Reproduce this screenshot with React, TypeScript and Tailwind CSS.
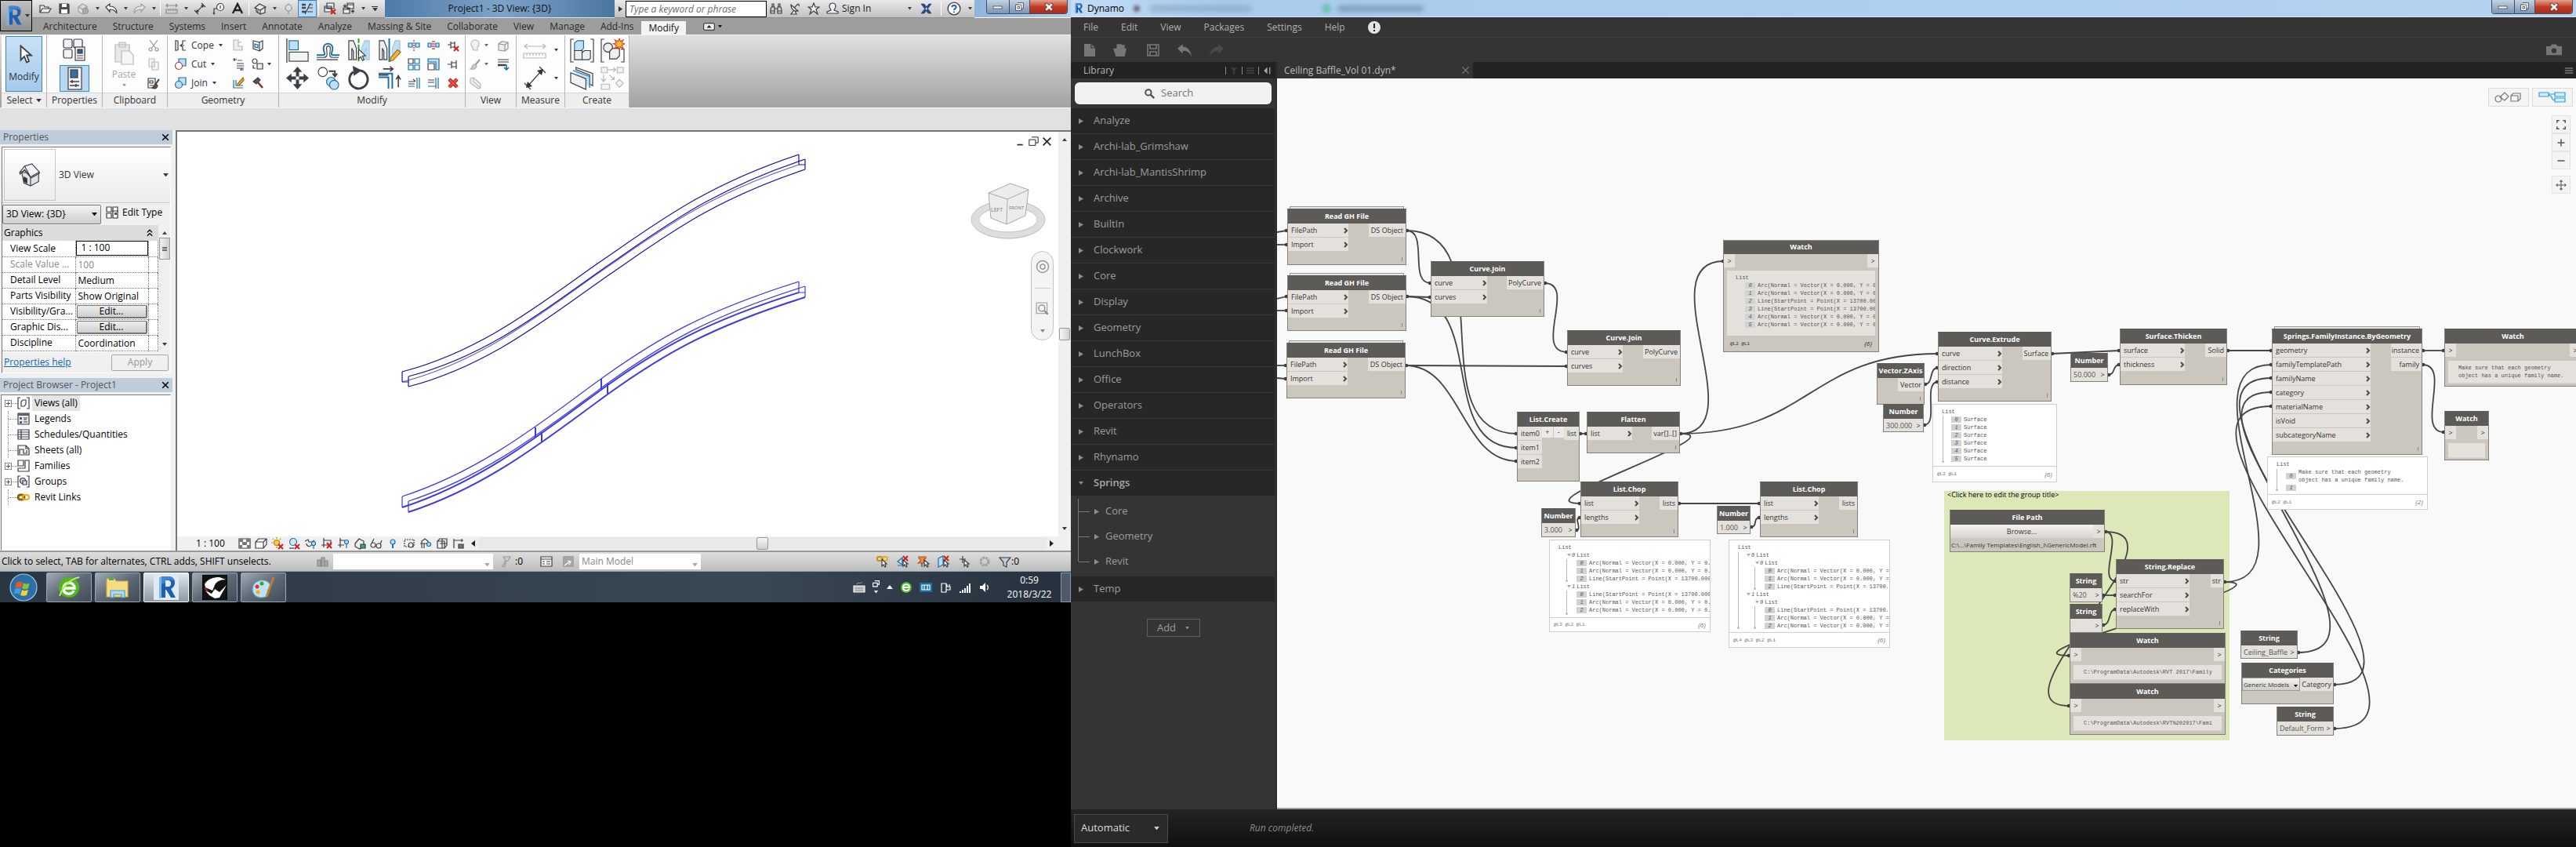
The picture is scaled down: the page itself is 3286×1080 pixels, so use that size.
import React from "react";

/* ---------- small drawing helpers ---------- */

type IcProps = { s?: number; w?: number; h?: number; vb?: string; children: React.ReactNode };
function Ic({ s = 16, w, h, vb = "0 0 16 16", children }: IcProps) {
  return (
    <svg width={w ?? s} height={h ?? s} viewBox={vb} fill="none" stroke="#3b3f46" strokeWidth="1.2" className="shrink-0" aria-hidden="true">
      {children}
    </svg>
  );
}

function Tri({ c = "#3a3a3a", w = 6 }: { c?: string; w?: number }) {
  return (
    <svg width={w} height={w / 2 + 1} viewBox="0 0 6 4" className="shrink-0" aria-hidden="true">
      <path d="M0 0h6L3 4z" fill={c} />
    </svg>
  );
}

function RLogo({ s }: { s: number }) {
  return (
    <svg width={s} height={s} viewBox="0 0 32 32" className="shrink-0" aria-hidden="true">
      <path d="M7 3l4-1v27l-4 1z" fill="#7fb6e6" />
      <path fillRule="evenodd" d="M10 2h8c6 0 9 3 9 8 0 4-2 6-5 8l6 11h-6l-6-10h-1v10h-5zM15 7v8h3c3 0 4-1 4-4s-1-4-4-4z" fill="#1f5fae" />
      <path d="M10 2h8c5 0 8 2 9 6-4-2-9-2-12-1v3l-5 2z" fill="#3f86cf" />
    </svg>
  );
}

function WindowButtons() {
  return (
    <div className="flex h-[18px] overflow-hidden rounded-b border border-t-0 border-[#3c4f66] text-white">
      <button aria-label="Minimize" className="flex w-7 items-center justify-center bg-linear-to-b from-[#c5d3e2] to-[#7c95b2]"><Ic w={14} h={8} vb="0 0 14 8"><rect x="1" y="3" width="11" height="3" fill="#fff" stroke="#445" strokeWidth=".8" /></Ic></button>
      <button aria-label="Restore" className="flex w-[27px] items-center justify-center border-x border-[#3c4f66] bg-linear-to-b from-[#c5d3e2] to-[#7c95b2]"><Ic s={13}><path d="M5 2h9v9h-3M2 5h9v9H2zM5 8h3v3H5z" stroke="#334" strokeWidth="1" fill="#fff" /></Ic></button>
      <button aria-label="Close" className="flex w-[47px] items-center justify-center bg-linear-to-b from-[#e0a08f] via-[#c23b22] to-[#a83018]"><Ic s={12}><path d="M2 2l12 12M14 2L2 14" stroke="#533" strokeWidth="5" /><path d="M3 3l10 10M13 3L3 13" stroke="#fff" strokeWidth="3.4" /></Ic></button>
    </div>
  );
}

/* ---------- Revit: header ---------- */

function QBtn({ label, on, children }: { label: string; on?: boolean; children: React.ReactNode }) {
  return (
    <button
      aria-label={label}
      className={on ? "flex h-[22px] w-6 items-center justify-center border border-[#3d84c6] bg-[#b8d8f2]" : "flex h-[22px] w-6 items-center justify-center"}
    >
      {children}
    </button>
  );
}
const QArr = () => (
  <span className="flex w-3 justify-center">
    <Tri w={5} />
  </span>
);
const QSep = () => <span className="mx-[2px] h-[18px] w-px border-r border-white bg-[#a9a9a9]" />;

function QuickAccess() {
  return (
    <div className="flex h-[23px] w-[450px] shrink-0 items-center border-b border-[#8d8d8d] bg-linear-to-b from-[#e9e9e9] to-[#c2c2c2] pl-[5px]">
      <QBtn label="Open"><Ic><path d="M1 13V4h5l1 2h5v2M1 13l3-5h11l-3 5z" fill="#eee" /></Ic></QBtn>
      <QBtn label="Save"><Ic><path d="M2 2h11l1 1v11H2z" fill="#4a4f57" /><path d="M5 2h6v4H5zM4 9h8v5H4z" fill="#fff" stroke="none" /></Ic></QBtn>
      <QBtn label="Synchronize"><Ic><path d="M2 6l5-4 6 3v6l-5 4-6-3zM2 6l6 3 5-4M8 9v6" stroke="#a0a0a0" fill="#dcdcdc" /><circle cx="11" cy="11" r="3.5" fill="#aaa" stroke="#999" /></Ic></QBtn>
      <QArr />
      <QBtn label="Undo"><Ic><path d="M1 6l5-4v3c5 0 9 2 9 9-2-4-5-5-9-5v3z" fill="#fff" /></Ic></QBtn>
      <QArr />
      <QBtn label="Redo"><Ic><path d="M15 6l-5-4v3c-5 0-9 2-9 9 2-4 5-5 9-5v3z" fill="#e6e6e6" stroke="#a0a0a0" /></Ic></QBtn>
      <QArr />
      <QSep />
      <QBtn label="Measure"><Ic><path d="M1 4h14M3 2L1 4l2 2M13 2l2 2-2 2M1 9h14v5H1zM4 9v2M7 9v2M10 9v2M13 9v2" stroke="#8b8b8b" /></Ic></QBtn>
      <QArr />
      <QBtn label="Aligned Dimension"><Ic><path d="M3 13L13 3M1 10l5 5M10 1l5 5" /><path d="M3 13l1-4 3 3zM13 3l-1 4-3-3z" fill="#333" stroke="none" /></Ic></QBtn>
      <QBtn label="Tag by Category"><Ic><circle cx="10" cy="6" r="4.5" fill="#fff" /><path d="M10 4v4M6 8H2v6M1 13l1 2 1-2" /></Ic></QBtn>
      <QBtn label="Text"><Ic><path d="M2 14L8 2l6 12M4.500 10h7" stroke="#222" strokeWidth="2.4" /></Ic></QBtn>
      <QSep />
      <QBtn label="Default 3D View"><Ic><path d="M1 7l6-5 8 4-1 2v5l-6 2-5-3V8z" fill="#e6e6e6" /><path d="M1 7l7 3 6-4M8 10v5M5 10v3" /></Ic></QBtn>
      <QArr />
      <QBtn label="Section"><Ic><path d="M8 1v14M3 8h10" stroke="#999" /><circle cx="8" cy="7" r="4" stroke="#999" fill="#ddd" /></Ic></QBtn>
      <QBtn label="Thin Lines" on><Ic><path d="M1 3h5M1 7h5M1 12h5" strokeWidth="2.5" stroke="#3d4a5a" /><path d="M12 1L5 15M10 3h5M9 7h6M8 12h7" /></Ic></QBtn>
      <QSep />
      <QBtn label="Close Hidden Windows"><Ic><path d="M4 1h9v7H4zM1 5h9v7H1zM1 7h9" fill="#eee" /><path d="M9 9l6 6M15 9l-6 6" stroke="#d11f1f" strokeWidth="2" /></Ic></QBtn>
      <QBtn label="Switch Windows"><Ic><path d="M6 1h8v7H6zM1 7h8v7H1zM1 9h8M6 3h8" fill="#eee" /><path d="M3 2v4M1 4l2 2 2-2M13 14v-4M11 12l2-2 2 2" /></Ic></QBtn>
      <QArr />
      <span className="flex w-[18px] flex-col items-center gap-px"><span className="h-px w-2 bg-[#333]" /><Tri w={7} /></span>
    </div>
  );
}

function InfoCenter() {
  return (
    <div className="flex h-[23px] w-[459px] shrink-0 items-center border-b border-[#8d8d8d] bg-linear-to-b from-[#e9e9e9] to-[#c2c2c2]">
      <span className="flex w-[14px] justify-center">
        <svg width="5" height="7" aria-hidden="true"><path d="M0 0v7l5-3.500z" fill="#333" /></svg>
      </span>
      <input aria-label="Search help" placeholder="Type a keyword or phrase" className="h-[21px] w-[180px] border border-black bg-white px-1 text-[12px] italic placeholder:text-[#6d6d6d]" />
      <span className="flex w-6 justify-center"><Ic><path d="M2 6h4v8H1V9zM14 6h-4v8h5V9zM6 8h4M3 2h2v4H3zM11 2h2v4h-2zM1 11h5M10 11h5" /></Ic></span>
      <span className="flex w-6 justify-center"><Ic><path d="M3 3c0 6 4 9 9 8zM7 7l5-5M12 2a2 2 0 011 3M7 10l-4 5h7l-2-4" fill="#e8e8e8" /></Ic></span>
      <span className="flex w-6 justify-center"><Ic><path d="M8 1l2 5h5l-4 3 2 6-5-4-5 4 2-6-4-3h5z" fill="#eee" /></Ic></span>
      <span className="flex w-6 justify-center"><Ic><path d="M8 1c3 0 4 2 4 4 0 3-2 3-2 5l5 2v2H1v-2l5-2c0-2-2-2-2-5 0-2 1-4 4-4z" fill="#f4f4f4" /></Ic></span>
      <span className="text-[12px] text-[#222]">Sign In</span>
      <span className="ml-auto flex w-3 justify-center"><Tri w={5} /></span>
      <span className="flex w-8 justify-center"><Ic><path d="M1 2h4l9 12h-4zM14 2h-3L1 14h4z" fill="#274f8e" stroke="#16305c" strokeWidth=".6" /></Ic></span>
      <QSep />
      <button aria-label="Help" className="flex w-7 justify-center"><Ic s={18}><circle cx="8" cy="8" r="7" fill="#fff" /><path d="M5.700 6.500c0-3 4.600-3 4.600 0 0 1.600-2.300 1.600-2.300 3.300M8 11v1.500" stroke="#2c62b0" strokeWidth="1.8" /></Ic></button>
      <span className="flex w-3 justify-center"><Tri w={5} /></span>
    </div>
  );
}

const TABS = ["Architecture", "Structure", "Systems", "Insert", "Annotate", "Analyze", "Massing & Site", "Collaborate", "View", "Manage", "Add-Ins"];

function RevitHeader() {
  return (
    <header className="flex bg-[#9d9d9d]">
      <button aria-label="Application menu" className="flex h-10 w-[41px] shrink-0 items-center justify-center gap-px border border-black bg-linear-to-b from-[#bfc0c1] to-[#8f9092]">
        <RLogo s={28} />
        <Tri w={6} />
      </button>
      <div className="flex min-w-0 flex-1 flex-col">
        <div className="flex h-[23px]">
          <QuickAccess />
          <div className="flex min-w-0 flex-1 items-center justify-center overflow-hidden border-b border-[#cfe2f5] bg-linear-to-r from-[#4d7aa8] via-[#7fa3c8] to-[#4a759f] text-[12px] whitespace-nowrap text-[#111]">
            Project1 - 3D View: {"{3D}"}
          </div>
          <InfoCenter />
          <div className="flex h-[23px] w-[123px] shrink-0 justify-end border-b border-white bg-linear-to-r from-[#8fb4dc] to-[#b5cfea] pr-1">
            <WindowButtons />
          </div>
        </div>
        <nav className="flex h-[21px] items-center pl-1 text-[12px] text-[#2b2b2b]">
          {TABS.map((t) => (
            <button key={t} className="px-[10px] whitespace-nowrap">{t}</button>
          ))}
          <button className="h-[17px] self-end bg-[#f4f4f4] px-[9px] leading-[17px] text-[#111]">Modify</button>
          <button aria-label="Minimize ribbon" className="ml-[22px] flex items-center gap-1">
            <Ic w={15} h={10} vb="0 0 15 10"><rect x=".6" y=".6" width="13.8" height="8.8" rx="2" fill="#eee" /><path d="M4.500 6.500h6L7.500 3z" fill="#222" stroke="none" /></Ic>
            <Tri c="#111" w={5} />
          </button>
        </nav>
      </div>
    </header>
  );
}

/* ---------- Revit: ribbon ---------- */

function Panel({ label, cls, children }: { label: React.ReactNode; cls: string; children: React.ReactNode }) {
  return (
    <section className={"flex shrink-0 flex-col border-r border-[#b5b5b5] bg-[#fdfdfd] " + cls}>
      <div className="flex h-[75px] items-center justify-center">{children}</div>
      <div className="flex flex-1 items-center justify-center gap-1 border-t border-[#d5d5d5] bg-[#eeeeee] text-[12px] whitespace-nowrap text-[#333]">{label}</div>
    </section>
  );
}

const B = "#1b6fa8";
const LB = "#bfe0f2";
const G = "#b9b9b9";

function Ribbon() {
  return (
    <div className="flex h-[94px] shrink-0 border-y border-[#f4f4f4] bg-linear-to-b from-[#e0e0e0] to-[#a2a2a2] pl-[2px]">
      <Panel cls="w-[58px]" label={<>Select <Tri w={7} /></>}>
        <button className="flex h-[71px] w-[47px] flex-col items-center justify-center gap-2 border border-[#3d84c6] bg-linear-to-b from-[#c9e1f5] to-[#a5c9ea] text-[12px] text-[#333]">
          <Ic s={24}><path d="M5 1v12l3-3 2 5 2-1-2-5h4z" fill="#fff" /></Ic>
          Modify
        </button>
      </Panel>
      <Panel cls="w-[71px]" label="Properties">
        <div className="flex flex-col items-center gap-1">
          <button aria-label="Type Properties"><Ic s={32} vb="0 0 32 32"><rect x="2" y="3" width="11" height="11" rx="2" fill="#f2f2f2" /><rect x="15" y="3" width="11" height="11" rx="2" fill="#f2f2f2" /><rect x="2" y="16" width="11" height="11" rx="2" fill="#f2f2f2" /><rect x="17" y="13" width="12" height="17" fill="#fff" /><rect x="20" y="16" width="6" height="5" fill="#2c5f8f" /><path d="M19 24h8M19 27h8" /></Ic></button>
          <button aria-label="Properties" className="flex h-[34px] w-[38px] items-center justify-center border border-[#3d84c6] bg-[#b8d8f2]"><Ic s={30} vb="0 0 30 30"><rect x="7" y="1" width="17" height="28" fill="#f5f5f5" /><rect x="10" y="4" width="9" height="10" fill="#3a6d9f" /><path d="M9 19h12M9 24h12M12 17v4M17 22v4" strokeWidth="1.5" /></Ic></button>
        </div>
      </Panel>
      <Panel cls="w-[83px]" label="Clipboard">
        <div className="flex items-center gap-3">
          <button className="flex w-9 flex-col items-center gap-[3px] text-[12px] text-[#a5a5a5]">
            <Ic s={30} vb="0 0 30 30"><path d="M4 4h18v22H4zM9 1h8v6H9z" fill="#e8e8e8" stroke={G} /><path d="M12 12h10l5 5v12H12z" fill="#f6f6f6" stroke={G} /></Ic>
            Paste
            <Tri c="#999" w={5} />
          </button>
          <div className="flex flex-col gap-2">
            <Ic><path d="M3 1l8 11M13 1L5 12" stroke="#999" /><circle cx="4" cy="13" r="2" stroke="#999" /><circle cx="12" cy="13" r="2" stroke="#999" /></Ic>
            <Ic><path d="M2 1h7v10H2zM6 5h8v10H6z" fill="#f4f4f4" stroke={G} /></Ic>
            <Ic><path d="M1 2h9v12H1zM3 5h4v3H3zM3 11h5" fill="#fff" /><path d="M15 3l-5 7" strokeWidth="2" /><path d="M11 9c-3 0-2 4-5 5 4 2 7 0 7-3z" fill="#7a4d2a" /></Ic>
          </div>
        </div>
      </Panel>
      <Panel cls="w-[142px]" label="Geometry">
        <div className="flex gap-3">
          <div className="flex flex-col gap-2 text-[12px] leading-4 text-[#333]">
            <button className="flex items-center gap-[6px]"><Ic><path d="M2 1v14M2 2h3M2 14h3M5 2v12M15 2h-4v4l-3 2 3 2v4h4M8 8h5" /></Ic>Cope <Tri w={5} /></button>
            <button className="flex items-center gap-[6px]"><Ic><path d="M6 1h9v9H6z" fill={LB} stroke={B} /><circle cx="6" cy="10" r="4.5" fill="#fff" stroke="#b33" /></Ic>Cut <Tri w={5} /></button>
            <button className="flex items-center gap-[6px]"><Ic><path d="M6 1h9v9H6z" fill={LB} stroke={B} /><circle cx="6" cy="10" r="4.5" fill={LB} stroke={B} /></Ic>Join <Tri w={5} /></button>
          </div>
          <div className="grid grid-cols-[25px_26px] gap-y-2">
            <Ic><path d="M2 1h6v8h5v5H2zM8 5l4-2" stroke={G} fill="#eee" /></Ic>
            <Ic><path d="M2 2l8 2v11l-8-3zM10 4l4-2v10l-4 3" fill="#fff" /><path d="M4 6l4 1v4l-4-1z" fill={LB} stroke={B} /></Ic>
            <Ic><path d="M1 2h5M3 0v4M12 13v3M6 7h9M6 10h9M6 13h9" /><path d="M7 3h6M10 15h5" stroke={B} /></Ic>
            <span className="flex items-center gap-1"><Ic><circle cx="4" cy="4" r="3" /><path d="M2 9v4h3M7 7h7v7H7z" fill="#eee" /></Ic><Tri w={5} /></span>
            <Ic><path d="M2 4v10h12M5 4v7h9" stroke={B} /><path d="M14 1L7 9v2h2l6-7z" fill="#f0b73c" stroke="#a06a10" /></Ic>
            <Ic><path d="M2 6l6-5 3 3-5 5z" fill="#555" /><path d="M8 7l6 7" strokeWidth="2.5" stroke="#6b3b2a" /></Ic>
          </div>
        </div>
      </Panel>
      <Panel cls="w-[238px]" label="Modify">
        <div className="flex gap-2">
          <div className="grid grid-cols-4 gap-x-2 gap-y-1">
            <Ic s={31} vb="0 0 32 32"><path d="M2 0v32" stroke="#222" /><rect x="5" y="3" width="12" height="12" fill={LB} stroke={B} /><rect x="5" y="18" width="25" height="12" fill="#f3f3f3" /></Ic>
            <Ic s={31} vb="0 0 32 32"><path d="M1 22h8c5 0 1-4 1-9 0-8 12-8 12 0 0 5-4 9 1 9h8" stroke={B} strokeWidth="2" /><path d="M1 28h28M1 25h9c7 0 4-7 4-12 0-4 5-4 5 0 0 5-3 12 3 12h8" /></Ic>
            <Ic s={31} vb="0 0 32 32"><path d="M3 3h6l4 10v15h-4V17l-2-4v15H3z" fill="#eee" /><path d="M30 3h-6l-4 10v15h4V17l2-4v15h4z" fill={LB} stroke="#9bc6de" /><path d="M16 0v31" stroke="#2c9a2c" strokeWidth="2" strokeDasharray="6 2" /><path d="M16 14v13l3-3 2 5 2-1-2-5h4z" fill="#fff" /></Ic>
            <Ic s={31} vb="0 0 32 32"><path d="M3 3h6l4 10v15h-4V17l-2-4v15H3z" fill="#eee" /><path d="M30 3h-6l-4 10v12l10-6z" fill={LB} stroke="#9bc6de" /><path d="M16 0v31" stroke={B} strokeWidth="2" /><path d="M27 15l4 3-10 11-4 1 1-5z" fill="#f0b73c" stroke="#a06a10" /></Ic>
            <Ic s={31} vb="0 0 32 32"><path d="M16 1l6 7h-4v6h6v-4l7 6-7 6v-4h-6v6h4l-6 7-6-7h4v-6H8v4l-7-6 7-6v4h6V8h-4z" fill="#3b3f46" stroke="none" /><rect x="14" y="14" width="4" height="4" fill="#fff" stroke="none" /></Ic>
            <Ic s={31} vb="0 0 32 32"><circle cx="9" cy="8" r="6" fill="#fff" /><path d="M17 7h8v5M22 10l3 4 3-4" strokeWidth="2" /><circle cx="20" cy="21" r="6" fill={LB} stroke={B} /><circle cx="24" cy="25" r="6" fill={LB} stroke={B} /></Ic>
            <Ic s={31} vb="0 0 32 32"><path d="M18 6a12 12 0 11-9 2" strokeWidth="3" /><path d="M9 1l10 5-9 6z" fill="#3b3f46" /></Ic>
            <Ic s={31} vb="0 0 32 32"><path d="M2 10h18v20M2 15h13v15" stroke={B} strokeWidth="2" /><path d="M8 4h12M17 1l4 3-4 3M28 28V14M25 18l3-5 3 5M2 12h13" strokeWidth="1.6" /></Ic>
          </div>
          <div className="grid grid-cols-3 gap-x-[9px] gap-y-2 py-[1px]">
            <Ic><path d="M1 5h5v5H1zM10 5h5v5h-5z" fill={LB} stroke={B} /><path d="M8 1v14" stroke="#c22" strokeDasharray="2 1" /></Ic>
            <Ic><path d="M1 5h4v5H1zM11 5h4v5h-4z" fill={LB} stroke={B} /><path d="M7 2v12M9 2v12" stroke="#c22" strokeDasharray="2 1" /></Ic>
            <Ic><path d="M1 7h4M5 3v9M5 5h5v5H5M10 3v9" /><path d="M9 9l6 6M15 9l-6 6" stroke="#d11f1f" strokeWidth="2" /></Ic>
            <Ic><path d="M1 1h6v6H1z" fill="#fff" /><path d="M9 1h6v6H9zM1 9h6v6H1zM9 9h6v6H9z" stroke={B} fill="#e8f5fb" /></Ic>
            <Ic><path d="M1 1h14v14h-4V5H1z" fill={LB} stroke={B} /><path d="M1 7h8v8H1z" fill="#fff" /></Ic>
            <Ic><path d="M1 8h5M6 4v9M6 6h6v5H6M12 3v11" /></Ic>
            <Ic><path d="M1 6h8M1 9h8M7 3l3 3" /><path d="M12 1v14M15 1v14M1 12h8" stroke={B} /></Ic>
            <Ic><path d="M1 4h8M1 7h8" /><path d="M1 12h10M11 1v14M14 1v14" stroke={B} /></Ic>
            <Ic><path d="M3 3l10 10M13 3L3 13" stroke="#7c1414" strokeWidth="4.5" /><path d="M3 3l10 10M13 3L3 13" stroke="#f04a3c" strokeWidth="3" /></Ic>
          </div>
        </div>
      </Panel>
      <Panel cls="w-[65px]" label="View">
        <div className="grid grid-cols-[16px_12px_20px] items-center gap-x-1 gap-y-2">
          <Ic><path d="M5 10c-4-3-2-9 3-9s7 6 3 9v4H6z" stroke={G} fill="#f2f2f2" /></Ic><Tri c="#666" w={5} />
          <Ic><path d="M2 6l4-3 8 1v8l-4 3-8-1zM2 6l8 1 4-3M10 7v8" stroke="#999" fill="#eee" /></Ic>
          <Ic><path d="M14 2L8 9" stroke="#999" strokeWidth="2" /><path d="M8 8c-4 0-3 4-6 6 5 1 8-1 8-4z" fill="#ccc" stroke="#aaa" /></Ic><Tri c="#666" w={5} />
          <Ic><path d="M1 2h14M1 5h14" /><path d="M1 9h10" strokeWidth="2.5" /><path d="M12 8v6M9 12l3 3 3-3" stroke={B} strokeWidth="1.6" /></Ic>
          <Ic><path d="M2 2l4-1 9 8v5l-3 1-10-7zM6 1v5l9 8" stroke={G} fill="#eee" /></Ic>
        </div>
      </Panel>
      <Panel cls="w-[62px]" label="Measure">
        <div className="grid grid-cols-[32px_6px] items-center gap-x-2 gap-y-1">
          <Ic s={32} vb="0 0 32 32"><path d="M2 11h27M6 8l-4 3 4 3M25 8l4 3-4 3M1 20h28v6H1zM5 20v3M9 20v3M13 20v3M17 20v3M21 20v3M25 20v3" stroke={G} /></Ic><Tri w={5} />
          <Ic s={32} vb="0 0 32 32"><path d="M5 27L25 5M2 22l8 8M21 1l8 8" /><path d="M4 28l2-8 6 6zM26 4l-2 8-6-6z" fill="#333" stroke="none" /></Ic><Tri w={5} />
        </div>
      </Panel>
      <Panel cls="w-[82px]" label="Create">
        <div className="grid grid-cols-2 gap-x-2 gap-y-1">
          <Ic s={31} vb="0 0 32 32"><path d="M5 1H1v30h4M27 1h4v30h-4" /><path d="M6 6l4-3h8v10l-3 3H6z" fill={LB} stroke={B} /><path d="M6 16h10v12H6zM16 19l3-3h8v10l-2 2h-9z" fill="#eee" /></Ic>
          <Ic s={31} vb="0 0 32 32"><path d="M5 1H1v30h4M27 14h4v17h-4" /><circle cx="10" cy="12" r="6" fill="#eee" /><path d="M12 17l4-4h9v10l-4 4h-9z" fill="#eee" /><path d="M25 0l1 4 4-2-2 4 4 1-4 2 2 4-4-2-1 4-2-4-4 2 2-4-4-2 4-1-2-4 4 2z" fill="#f9c23c" stroke="#e2481e" /></Ic>
          <Ic s={31} vb="0 0 32 32"><path d="M8 2l22 8v16l-4-2V12L8 5z" fill="#eee" /><path d="M4 6l22 8v15" stroke={B} fill={LB} /><path d="M1 9l20 8v14L1 22z" fill="#f1f1f1" /></Ic>
          <Ic s={31} vb="0 0 32 32"><path d="M1 2h8v7H1zM22 2h8v7h-8zM1 24h11v7H1zM25 18l5 5-5 5-5-5zM10 5h10M17 2l3 3-3 3M4 11v9M1 17l3 4 3-4M12 12l6 6M18 14v4h-4" stroke={G} fill="#f2f2f2" /></Ic>
        </div>
      </Panel>
    </div>
  );
}

/* ---------- Revit: docks ---------- */

function DockTitle({ children }: { children: React.ReactNode }) {
  return (
    <div className="flex h-[18px] shrink-0 items-center justify-between bg-[#bfcddb] px-1 text-[12px] text-[#555]">
      <span>{children}</span>
      <button aria-label="Close panel"><Ic s={10}><path d="M2 2l12 12M14 2L2 14" stroke="#000" strokeWidth="2.4" /></Ic></button>
    </div>
  );
}

const PROPS: { n: string; v: string; k?: "box" | "dim" | "btn" }[] = [
  { n: "View Scale", v: "1 : 100", k: "box" },
  { n: "Scale Value ...", v: "100", k: "dim" },
  { n: "Detail Level", v: "Medium" },
  { n: "Parts Visibility", v: "Show Original" },
  { n: "Visibility/Gra...", v: "Edit...", k: "btn" },
  { n: "Graphic Dis...", v: "Edit...", k: "btn" },
  { n: "Discipline", v: "Coordination" },
];

function PropertiesPalette() {
  return (
    <>
      <DockTitle>Properties</DockTitle>
      <div className="mt-[3px] mb-[6px] ml-[2px] flex h-[289px] w-[216px] flex-col overflow-hidden border border-white border-t-[#7a7a7a] border-l-[#7a7a7a] bg-[#f0f0f0] text-[12px] text-black">
        <div className="flex h-[71px] shrink-0 items-center border-b border-[#ccc] bg-linear-to-b from-white to-[#ececec] px-[2px]">
          <div className="flex h-[66px] w-[66px] items-center justify-center border border-[#c8c8c8]">
            <Ic s={30} vb="0 0 32 32"><path d="M5 13l3 14 9 4 11-6V12z" fill="#dfe3e8" /><path d="M2 13L9 4l10-3 10 11-12 7-8-9z" fill="#f3f4f6" /><path d="M2 13l1 2 6-6 9 11 11-6v-2M17 19v12M9 4l8 15" /><path d="M8 19l4 2v6l-4-2z" fill="#333" /></Ic>
          </div>
          <span className="ml-1 flex-1 text-[#333]">3D View</span>
          <Tri w={7} />
        </div>
        <div className="flex h-[28px] shrink-0 items-center gap-[6px]">
          <button className="flex h-[25px] w-[126px] items-center justify-between rounded-xs border border-[#777] bg-linear-to-b from-[#f2f2f2] to-[#cfcfcf] px-1">3D View: {"{3D}"}<Tri c="#000" w={7} /></button>
          <button className="flex items-center gap-[5px] pb-1"><Ic><path d="M1 1h6v6H1zM9 1h6v6H9zM1 9h6v6H1z" fill="#fff" /><path d="M9 6h6v9H9z" fill="#fff" stroke="#333" /><path d="M11 8h3v3h-3z" fill="#2c5f8f" stroke="none" /></Ic>Edit Type</button>
        </div>
        <div className="flex min-h-0 flex-1">
          <div className="min-w-0 flex-1 overflow-hidden bg-white">
            <div className="flex h-5 items-center justify-between bg-[#dcdcdc] pr-[6px] pl-[2px]">Graphics<Ic s={10}><path d="M3 7l5-5 5 5M3 14l5-5 5 5" stroke="#000" strokeWidth="2" /></Ic></div>
            <table className="w-full table-fixed border-collapse text-left whitespace-nowrap">
              <colgroup><col className="w-[93px]" /><col className="w-[93px]" /><col /></colgroup>
              <tbody>
                {PROPS.map((p) => (
                  <tr key={p.n} className="h-5 border-b border-dotted border-[#777]">
                    <th className={p.k === "dim" ? "overflow-hidden border-r border-dotted border-[#777] p-0 pl-[10px] font-normal text-[#888]" : "overflow-hidden border-r border-dotted border-[#777] p-0 pl-[10px] font-normal"}>{p.n}</th>
                    <td className="overflow-hidden border-r border-dotted border-[#777] p-0 leading-[19px]">
                      {p.k === "box" ? <span className="block h-[19px] border border-black pl-[6px] leading-4">{p.v}</span>
                        : p.k === "btn" ? <button className="mx-px block h-[17px] w-[90px] rounded-xs border border-r-2 border-b-2 border-[#777] bg-linear-to-b from-[#eee] to-[#cfcfcf] text-center leading-[14px]">{p.v}</button>
                        : <span className={p.k === "dim" ? "pl-[3px] text-[#888]" : "pl-[3px]"}>{p.v}</span>}
                    </td>
                    <td className="border-r border-dotted border-[#777] p-0" />
                  </tr>
                ))}
              </tbody>
            </table>
          </div>
          <div className="flex w-[15px] flex-col items-center justify-between bg-[#f0f0f0] py-2">
            <svg width="6" height="4" aria-hidden="true"><path d="M0 4h6L3 0z" fill="#444" /></svg>
            <span className="mt-1 flex h-7 w-[14px] flex-col items-center justify-center gap-px border border-[#999] bg-linear-to-r from-[#f4f4f4] to-[#cdcdcd]">
              <span className="h-px w-[6px] bg-[#444]" /><span className="h-px w-[6px] bg-[#444]" /><span className="h-px w-[6px] bg-[#444]" />
            </span>
            <span className="flex-1" />
            <Tri w={6} />
          </div>
        </div>
        <div className="flex h-[26px] shrink-0 items-center justify-between px-[2px]">
          <a href="#help" className="text-[#1464b4] underline">Properties help</a>
          <button className="h-[21px] w-[73px] rounded-xs border border-[#aaa] text-[#999]">Apply</button>
        </div>
      </div>
    </>
  );
}

const TREE: { t: string; plus?: boolean; icon: React.ReactNode }[] = [
  { t: "Views (all)", plus: true, icon: <path d="M4 1H1v14h3M12 1h3v14h-3M5 6l2-2h4v5l-2 3H5z" fill="#fff" /> },
  { t: "Legends", icon: <><path d="M1 1h14v14H1z" fill="#e8eaed" /><path d="M1 1h14v3H1zM3 6h3v3H3zM3 11h3v3H3z" fill="#5a616b" stroke="none" /><path d="M8 7h5M8 9h4M8 12h5" /></> },
  { t: "Schedules/Quantities", icon: <><path d="M1 2h14v12H1z" fill="#fff" /><path d="M1 5h14M1 8h14M1 11h14M5 2v12" /></> },
  { t: "Sheets (all)", icon: <path d="M1 2h10l4 4v8H1zM11 2v4h4M3 13V7h5v5h4V8" fill="#eef2f5" /> },
  { t: "Families", plus: true, icon: <path d="M1 1h7v7H1zM10 1h5v14H1v-4h9z" fill="#fff" /> },
  { t: "Groups", plus: true, icon: <><path d="M4 1H1v14h3M12 1h3v14h-3" /><circle cx="7" cy="7" r="3.5" fill="#ccd" /><path d="M7 7h5v5H7z" fill="#dde" /></> },
  { t: "Revit Links", icon: <><rect x="1" y="5" width="8" height="6" rx="3" stroke="#8a6208" strokeWidth="3" /><rect x="7" y="5" width="8" height="6" rx="3" stroke="#e8b11c" strokeWidth="2" /></> },
];

function ProjectBrowser() {
  return (
    <>
      <DockTitle>Project Browser - Project1</DockTitle>
      <ul className="mt-[3px] ml-px w-[217px] flex-1 border border-white border-t-[#7a7a7a] border-l-[#7a7a7a] bg-white text-[12px] text-black">
        {TREE.map((r) => (
          <li key={r.t} className="flex h-5 items-center">
            <span className="flex w-5 items-center pl-[4px]">
              {r.plus ? <Ic s={9} vb="0 0 9 9"><rect x=".5" y=".5" width="8" height="8" stroke="#888" strokeWidth="1" fill="#fff" /><path d="M2 4.500h5M4.500 2v5" stroke="#36598c" strokeWidth="1" /></Ic> : <span className="ml-1 h-5 w-px border-l border-dotted border-[#888]" />}
              <span className="h-px flex-1 border-t border-dotted border-[#888]" />
            </span>
            <Ic>{r.icon}</Ic>
            <span className={r.t === "Views (all)" ? "ml-[3px] bg-[#e6e4e4] px-[3px] leading-5" : "ml-[3px] px-[3px] leading-5"}>{r.t}</span>
          </li>
        ))}
      </ul>
    </>
  );
}

/* ---------- Revit: 3D view ---------- */

const TOP_EDGE = "M512 474C620 446 700 378 770 330S900 236 1018 197";
const LOW_EDGE = "M512 633C620 598 700 530 770 480S900 396 1018 359";

function ModelView() {
  return (
    <svg viewBox="226 168 1122 516" className="h-full w-full" preserveAspectRatio="xMidYMid meet" aria-label="3D model view">
      <g fill="none" stroke="#1414a0" strokeWidth="1.2">
        <path d={TOP_EDGE} /><path d={TOP_EDGE} transform="translate(0 13)" stroke="#6a6ac8" />
        <path d={TOP_EDGE} transform="translate(8 6)" /><path d={TOP_EDGE} transform="translate(8 19)" />
        <path d="M512 474v13M520 480v13M512 487h8M1018 197v13M1018 210h8M1026 203v13" />
      </g>
      <g fill="none" stroke="#3c3ce0" strokeWidth="1.2">
        <path d={LOW_EDGE} /><path d={LOW_EDGE} transform="translate(0 14)" strokeWidth="2" />
        <path d={LOW_EDGE} transform="translate(8 6)" /><path d={LOW_EDGE} transform="translate(8 20)" strokeWidth="2" />
        <path d="M512 633v14M520 639v14M1018 359v14M1018 373h8M1026 365v14" />
        <path d="M682 545v13M690 551v13M766 483v13M774 489v13" strokeWidth="2" />
      </g>
    </svg>
  );
}

const VIEW_ICONS: React.ReactNode[] = [
  <><path d="M1 2h14v12H1z" fill="#fff" /><path d="M1 2h5v4H1zM10 2h5v4h-5zM5 6h6v4H5zM1 10h4v4H1zM11 10h4v4h-4z" fill="#777" stroke="none" /></>,
  <path d="M1 6l4-4h10v7l-4 5H1zM1 6h10v8M11 6l4-4" fill="#fff" />,
  <><circle cx="7" cy="7" r="3.5" fill="#f6c944" stroke="#b98410" /><path d="M7 0v2M7 12v2M0 7h2M2 2l1 1M12 2l-1 1" stroke="#b98410" /><path d="M9 9l6 6M15 9l-6 6" stroke="#d11f1f" strokeWidth="2" /></>,
  <><circle cx="7" cy="6" r="4.5" fill="#cfe6f5" stroke={B} /><path d="M2 14h6" /><path d="M9 9l6 6M15 9l-6 6" stroke="#d11f1f" strokeWidth="2" /></>,
  <><path d="M1 5l4-2 1 3h4l3-2M3 8c0 4 5 5 7 1" /><circle cx="12" cy="8" r="2.5" fill="#bfe0f2" stroke={B} /><path d="M12 11v4" stroke={B} /></>,
  <><path d="M4 1v12M1 10h12M4 4h9v6" /><path d="M8 7l6 7M14 7l-6 7" stroke="#d11f1f" strokeWidth="2" /></>,
  <><path d="M4 1v12M1 10h8M4 4h6" /><circle cx="12" cy="6" r="2.5" fill="#bfe0f2" stroke={B} /><path d="M12 9v5" stroke={B} /></>,
  <><path d="M2 8l5-6 6 3v7l-5 3-6-3z" fill="#eee" /><path d="M9 9h6v5H9z" fill="#3ea76a" /></>,
  <><circle cx="4" cy="10" r="3" /><circle cx="11" cy="11" r="3" /><path d="M2 8L5 2M13 9l2-5" /></>,
  <><circle cx="8" cy="6" r="3" fill="#bfe0f2" stroke={B} /><path d="M8 9v5" stroke={B} strokeWidth="2" /></>,
  <><path d="M2 3h12v9H2z" strokeDasharray="2 1" /><circle cx="10" cy="10" r="3" fill="#eee" /></>,
  <><path d="M3 14V5l4-3 4 3v5M1 8h10M6 14V8" /><circle cx="12" cy="9" r="2.5" fill="#bfe0f2" stroke={B} /></>,
  <><path d="M2 5l3-3h9v8l-3 4H2zM2 5h9v9M5 8h9M8 2v12" /></>,
  <><path d="M2 2v12M2 4h12M12 2v4" /><path d="M8 9h6v5H8z" fill="#777" /></>,
];

function RevitCanvas() {
  return (
    <div className="flex min-w-0 flex-1 flex-col border-t-2 border-l-2 border-[#777] bg-white">
      <div className="flex min-h-0 flex-1">
        <div className="relative min-w-0 flex-1">
          <ModelView />
          <div className="absolute top-[6px] right-2 flex gap-1">
            <Ic s={13}><path d="M3 13h9" strokeWidth="2" stroke="#222" /></Ic>
            <Ic s={13}><path d="M5 1h10v9h-4M1 5h10v9H1z" stroke="#222" /></Ic>
            <Ic s={13}><path d="M2 2l12 12M14 2L2 14" strokeWidth="2" stroke="#222" /></Ic>
          </div>
          <svg className="absolute top-[56px] right-[14px]" width="100" height="90" viewBox="0 0 100 90" aria-label="View cube">
            <ellipse cx="50" cy="56" rx="42" ry="20" fill="none" stroke="#dedede" strokeWidth="9" />
            <ellipse cx="50" cy="56" rx="47" ry="24" fill="none" stroke="#bdbdbd" strokeWidth="1" />
            <ellipse cx="50" cy="56" rx="37" ry="16" fill="none" stroke="#c6c6c6" strokeWidth="1" />
            <path d="M25 22l28-12 23 8-4 33-24 11-20-8z" fill="#ececec" stroke="#a9a9a9" />
            <path d="M25 22l24 8 27-12M49 30l-1 32" stroke="#a9a9a9" fill="none" />
            <text x="28" y="46" fontSize="7" fill="#777">LEFT</text>
            <text x="51" y="43" fontSize="6" fill="#777">FRONT</text>
          </svg>
          <div className="absolute top-[152px] right-[6px] flex h-[114px] w-[29px] flex-col items-center justify-around rounded-2xl border border-[#c2c2c2] bg-[#f4f4f4]">
            <Ic s={20}><circle cx="8" cy="8" r="6" stroke="#999" /><circle cx="8" cy="8" r="2.5" stroke="#999" /></Ic>
            <span className="h-px w-5 bg-[#ccc]" />
            <Ic s={18}><path d="M1 1h12v12H1z" stroke="#aaa" /><circle cx="7" cy="7" r="3.5" stroke="#888" /><path d="M10 10l4 4" stroke="#888" strokeWidth="2" /></Ic>
            <Tri c="#888" w={6} />
          </div>
        </div>
        <div className="flex w-4 flex-col items-center bg-[#f0f0f0] py-2">
          <svg width="6" height="4" aria-hidden="true"><path d="M0 4h6L3 0z" fill="#444" /></svg>
          <span className="flex-1" />
          <span className="h-4 w-[14px] rounded-xs border border-[#999] bg-linear-to-r from-[#f6f6f6] to-[#cfcfcf]" />
          <span className="flex-1" />
          <Tri w={6} />
        </div>
      </div>
      <div className="flex h-[18px] shrink-0 items-center bg-[#f0f0f0] text-[12px] text-black">
        <span className="w-[78px] pl-6">1 : 100</span>
        <div className="flex gap-[5px]">{VIEW_ICONS.map((c, i) => <Ic key={i}>{c}</Ic>)}</div>
        <svg width="5" height="8" className="ml-2" aria-hidden="true"><path d="M5 0v8L0 4z" fill="#222" /></svg>
        <div className="mx-1 flex h-4 flex-1 justify-center bg-[#e9e9e9]"><span className="h-4 w-[15px] rounded-xs border border-[#999] bg-linear-to-b from-[#f6f6f6] to-[#cfcfcf]" /></div>
        <svg width="5" height="8" className="mr-[22px]" aria-hidden="true"><path d="M0 0v8l5-4z" fill="#222" /></svg>
      </div>
    </div>
  );
}

function StatusSelect({ label, value, cls }: { label: string; value: string; cls: string }) {
  return (
    <span className={"relative h-5 shrink-0 " + cls}>
      <select aria-label={label} className="h-full w-full appearance-none bg-white pl-[3px] text-[#888]"><option>{value}</option></select>
      <span className="absolute right-1 bottom-1"><Tri c="#aaa" w={7} /></span>
    </span>
  );
}

function RevitStatus() {
  return (
    <footer className="flex h-[26px] shrink-0 items-center border-t-2 border-[#999] bg-linear-to-b from-[#dedede] to-[#bdbdbd] text-[12px] text-black">
      <span className="w-[397px] pl-[2px] whitespace-nowrap">Click to select, TAB for alternates, CTRL adds, SHIFT unselects.</span>
      <span className="flex w-7 justify-center"><Ic><path d="M2 6h4v8H2zM7 3h4v11H7zM11 7h4v7h-4z" fill="#aaa" stroke="#888" /></Ic></span>
      <StatusSelect label="Workset" value="" cls="w-[204px]" />
      <span className="flex w-[60px] items-center gap-1 pl-2"><Ic><path d="M5 2h9l-3 5-3 1-1 7-3-1 4-7z" fill="#ccc" stroke="#999" /></Ic>:0</span>
      <span className="flex w-[50px] items-center gap-3"><Ic><path d="M1 2h14v12H1zM1 5h14M3 8h3M3 11h3M8 8h5M8 11h5" fill="#fff" /></Ic><Ic><path d="M1 1h14v14H1z" fill="#a4a4a4" stroke="none" /><path d="M3 13l7-5M7 7l4 1-2 4" stroke="#fff" /></Ic></span>
      <StatusSelect label="Design option" value="Main Model" cls="w-[155px]" />
      <div className="ml-auto flex items-center gap-[10px] pr-[66px]">
        <Ic><rect x="1" y="2" width="7" height="5" rx="2" stroke="#c8920e" strokeWidth="2" /><rect x="7" y="2" width="7" height="5" rx="2" stroke="#e8b11c" strokeWidth="2" /><path d="M7 5v9l2-2 2 3 1-1-1-3h2z" fill="#fff" /></Ic>
        <Ic><path d="M1 8l6-5v9zM1 13h8" stroke={B} fill={LB} /><path d="M8 1l6 6M14 1L8 7" stroke="#d11f1f" strokeWidth="2" /><path d="M8 6v8l2-2 2 3 1-1-1-3h2z" fill="#fff" /></Ic>
        <Ic><path d="M2 2h9v2l-2 1v3l3 2H1l3-2V5L2 4z" fill="#ee8a3c" stroke="#b55314" /><path d="M6 10v5" /><path d="M9 6v8l2-2 2 3 1-1-1-3h2z" fill="#fff" /></Ic>
        <Ic><path d="M1 4l6-3v11l-6 3z" stroke={B} fill={LB} /><path d="M8 1l6 6M14 1L8 7" stroke="#d11f1f" strokeWidth="2" /><path d="M8 6v8l2-2 2 3 1-1-1-3h2z" fill="#fff" /></Ic>
        <Ic><path d="M6 1v9M2 5h8" /><path d="M8 6v8l2-2 2 3 1-1-1-3h2z" fill="#fff" /></Ic>
        <Ic><circle cx="8" cy="8" r="5" stroke="#a0a0a0" strokeWidth="3" strokeDasharray="3 1" /></Ic>
        <span className="flex items-end"><Ic><path d="M1 2h14l-5 6v6l-4-2V8z" fill="#c3cddb" /></Ic>:0</span>
      </div>
    </footer>
  );
}

function Taskbar() {
  const btn = "flex h-[38px] items-center justify-center rounded-xs border border-[#9aa5b0] bg-linear-to-br from-[#a3acb5] via-[#5d6975] to-[#414d59]";
  return (
    <div className="flex h-10 shrink-0 items-center border-t border-[#8fa0ae] bg-linear-to-r from-[#2a3642] via-[#3a4755] via-70% to-[#26313d] text-white">
      <button aria-label="Start" className="flex w-[59px] justify-center">
        <Ic s={38} vb="0 0 38 38"><circle cx="19" cy="19" r="17" fill="#2a6fa5" stroke="#9cc7e6" /><path d="M10 13c3-2 5-2 8 0l-2 7c-3-2-5-1-8 0z" fill="#e8562a" stroke="none" /><path d="M19 13c3 2 5 2 8 0l-2 7c-3 2-5 2-8 0z" fill="#86c440" stroke="none" /><path d="M8 21c3-1 5-2 8 0l-2 7c-3-2-5-2-7 0z" fill="#3fa0e0" stroke="none" /><path d="M17 22c3 2 5 1 8 0l-2 7c-3 1-5 1-8 0z" fill="#f8cf3a" stroke="none" /></Ic>
      </button>
      <div className="flex items-center gap-1">
        <button aria-label="Browser" className={btn + " w-[58px]"}><Ic s={32} vb="0 0 32 32"><circle cx="16" cy="16" r="13" fill="#4fb81f" stroke="none" /><path d="M9 17h14c0-9-13-9-14 0 0 9 11 9 13 3" stroke="#fff" strokeWidth="3.5" /><path d="M4 27C10 10 20 5 29 3" stroke="#b4ec6c" strokeWidth="2" /></Ic></button>
        <button aria-label="Explorer" className={btn + " w-[58px]"}><Ic s={32} vb="0 0 32 32"><path d="M2 5h10l2 3h15v20H2z" fill="#f6dc82" stroke="#d6ae47" /><path d="M5 2h6v5H5z" fill="#4fae55" stroke="none" /><path d="M7 29V20h18v9h-4v-4H11v4z" fill="#a9dcf4" stroke="#4a9ccc" /></Ic></button>
        <button aria-label="Revit" className="flex h-[38px] w-[58px] items-center justify-center rounded-xs border border-white bg-linear-to-b from-[#e3e8ed] to-[#8c99a6]"><span className="bg-[#dfeaf6]"><RLogo s={32} /></span></button>
        <button aria-label="Rhino" className={btn + " w-[58px]"}><Ic s={32} vb="0 0 32 32"><path d="M0 0h32v32H0z" fill="#111" stroke="#000" /><path d="M3 12C7 5 14 3 22 3l8 3c-8 0-12 3-14 7l-3 7-9-4z" fill="#fff" stroke="none" /><path d="M4 20l5 6 7 4 6-1 9-16-9 9-6-4-4 6z" fill="#fff" stroke="none" /><path d="M3 17l4 3" stroke="#c22" strokeWidth="2" /></Ic></button>
        <button aria-label="Paint" className={btn + " w-[58px]"}><Ic s={32} vb="0 0 32 32"><path d="M2 18C2 8 14 4 22 9c6 5 2 8 0 10s3 7-3 9C10 31 2 27 2 18z" fill="#bfe1f4" stroke="#5d9cc2" /><circle cx="8" cy="15" r="2.5" fill="#d33" stroke="none" /><circle cx="14" cy="11" r="2.5" fill="#3a3" stroke="none" /><circle cx="9" cy="22" r="2.5" fill="#fa0" stroke="none" /><path d="M29 3L20 28" stroke="#c57a2f" strokeWidth="3" /></Ic></button>
      </div>
      <div className="ml-auto flex items-center gap-[9px]">
        <Ic><path d="M1 6h14v8H1z" fill="#ccc" stroke="#eee" /><path d="M3 9h10M3 12h10M5 4c2-4 4 1 7-3" stroke="#888" /></Ic>
        <span className="flex flex-col items-center gap-1"><Ic s={9}><path d="M5 1h10v8h-4M1 6h10v8H1z" stroke="#fff" strokeWidth="2" /></Ic><Tri c="#fff" w={5} /></span>
        <svg width="8" height="5" aria-hidden="true"><path d="M0 5h8L4 0z" fill="#fff" /></svg>
        <Ic><circle cx="8" cy="8" r="7" fill="#4fb81f" stroke="none" /><path d="M4 8h8c0-5-8-5-8 0s6 5 8 2" stroke="#fff" strokeWidth="2" /></Ic>
        <Ic><path d="M0 2h16v12H0z" fill="#1d6f9c" stroke="none" /><path d="M3 5h10v6H3zM6 5v6M10 5v6" stroke="#fff" /></Ic>
        <Ic><path d="M3 3h6v11H3zM9 7h5v4H9zM10 4v3M13 4v3" stroke="#fff" /></Ic>
        <Ic><path d="M1 15h2v-2H1zM4 15h2v-4H4zM7 15h2V9H7zM10 15h2V6h-2zM13 15h2V3h-2z" fill="#fff" stroke="none" /></Ic>
        <Ic><path d="M2 6h3l4-4v12l-4-4H2z" fill="#fff" stroke="none" /><path d="M11 5c2 2 2 4 0 6" stroke="#fff" /></Ic>
        <div className="flex w-20 flex-col items-center text-[12px] leading-[18px]"><span>0:59</span><span>2018/3/22</span></div>
        <span className="-ml-[9px] h-[38px] w-[13px] border border-[#8b98a5] bg-[#4d5a68]" />
      </div>
    </div>
  );
}

function Revit() {
  return (
    <div className="flex min-h-0 min-w-0 flex-[768] flex-col bg-[#f0f0f0]">
      <RevitHeader />
      <Ribbon />
      <div className="h-[28px] shrink-0 bg-[#e0e1e3]" />
      <div className="flex min-h-0 flex-1 gap-1">
        <aside className="flex w-[220px] shrink-0 flex-col">
          <PropertiesPalette />
          <ProjectBrowser />
        </aside>
        <RevitCanvas />
      </div>
      <RevitStatus />
      <Taskbar />
    </div>
  );
}

/* ---------- Dynamo: graph ---------- */

type GNode = {
  x: number; y: number; w: number; h: number; title: string;
  ins?: string[]; outs?: string[]; lw?: number; rw?: number;
  kind?: "num" | "watch" | "file" | "list" | "cat"; value?: string; lines?: string[]; stack?: boolean;
};

const NODES: GNode[] = [
  { x: 1642, y: 266, w: 152, h: 72, title: "Read GH File", ins: ["FilePath", "Import"], outs: ["DS Object"], lw: 77, rw: 47, stack: true },
  { x: 1642, y: 351, w: 152, h: 71, title: "Read GH File", ins: ["FilePath", "Import"], outs: ["DS Object"], lw: 77, rw: 47, stack: true },
  { x: 1641, y: 437, w: 152, h: 71, title: "Read GH File", ins: ["FilePath", "Import"], outs: ["DS Object"], lw: 77, rw: 47, stack: true },
  { x: 1825, y: 333, w: 145, h: 71, title: "Curve.Join", ins: ["curve", "curves"], outs: ["PolyCurve"], lw: 71, rw: 47 },
  { x: 1999, y: 421, w: 145, h: 71, title: "Curve.Join", ins: ["curve", "curves"], outs: ["PolyCurve"], lw: 70, rw: 47 },
  { x: 1935, y: 525, w: 80, h: 89, title: "List.Create", ins: ["item0", "item1", "item2"], outs: ["list"], lw: 31, rw: 19, kind: "list" },
  { x: 2024, y: 525, w: 119, h: 53, title: "Flatten", ins: ["list"], outs: ["var[]..[]"], lw: 57, rw: 35 },
  { x: 2016, y: 614, w: 125, h: 71, title: "List.Chop", ins: ["list", "lengths"], outs: ["lists"], lw: 74, rw: 23 },
  { x: 1966, y: 648, w: 44, h: 37, title: "Number", kind: "num", value: "3.000" },
  { x: 2245, y: 614, w: 125, h: 71, title: "List.Chop", ins: ["list", "lengths"], outs: ["lists"], lw: 74, rw: 23 },
  { x: 2190, y: 645, w: 43, h: 36, title: "Number", kind: "num", value: "1.000" },
  { x: 2394, y: 463, w: 61, h: 53, title: "Vector.ZAxis", outs: ["Vector"], rw: 33 },
  { x: 2402, y: 515, w: 52, h: 36, title: "Number", kind: "num", value: "300.000" },
  { x: 2472, y: 423, w: 145, h: 89, title: "Curve.Extrude", ins: ["curve", "direction", "distance"], outs: ["Surface"], lw: 81, rw: 36 },
  { x: 2641, y: 450, w: 48, h: 37, title: "Number", kind: "num", value: "50.000" },
  { x: 2704, y: 419, w: 137, h: 72, title: "Surface.Thicken", ins: ["surface", "thickness"], outs: ["Solid"], lw: 82, rw: 27 },
  { x: 2898, y: 419, w: 192, h: 161, title: "Springs.FamilyInstance.ByGeometry", ins: ["geometry", "familyTemplatePath", "familyName", "category", "materialName", "isVoid", "subcategoryName"], outs: ["instance", "family"], lw: 125, rw: 39, stack: true },
  { x: 3118, y: 419, w: 175, h: 74, title: "Watch", kind: "watch", lines: ["Make sure that each geometry", "object has a unique family name."] },
  { x: 3118, y: 524, w: 57, h: 63, title: "Watch", kind: "watch", lines: [" "] },
  { x: 2487, y: 650, w: 198, h: 54, title: "File Path", kind: "file", value: "C:\\...\\Family Templates\\English_I\\GenericModel.rft" },
  { x: 2699, y: 713, w: 138, h: 89, title: "String.Replace", ins: ["str", "searchFor", "replaceWith"], outs: ["str"], lw: 93, rw: 16 },
  { x: 2640, y: 731, w: 42, h: 37, title: "String", kind: "num", value: "%20" },
  { x: 2640, y: 770, w: 42, h: 37, title: "String", kind: "num", value: "" },
  { x: 2640, y: 807, w: 199, h: 65, title: "Watch", kind: "watch", lines: ["C:\\ProgramData\\Autodesk\\RVT 2017\\Family"] },
  { x: 2640, y: 872, w: 199, h: 65, title: "Watch", kind: "watch", lines: ["C:\\ProgramData\\Autodesk\\RVT%202017\\Fami"] },
  { x: 2858, y: 804, w: 73, h: 36, title: "String", kind: "num", value: "Ceiling_Baffle" },
  { x: 2859, y: 845, w: 118, h: 53, title: "Categories", kind: "cat", value: "Generic Models", outs: ["Category"] },
  { x: 2904, y: 901, w: 73, h: 37, title: "String", kind: "num", value: "Default_Form" },
];

const WIRES = [
  "M1629 296L1641 294", "M1629 312H1641", "M1629 381L1641 378", "M1629 396H1641", "M1629 466H1640", "M1629 482L1640 483",
  "M1794 294C1823 294 1796 361 1825 361", "M1794 294C1921 294 1808 553 1935 553",
  "M1794 378L1825 379", "M1794 378C1900 378 1830 571 1935 571",
  "M1793 466L1999 467", "M1793 466C1864 466 1864 588 1935 588",
  "M1970 361C2012 361 1955 449 1999 449", "M2015 553H2024",
  "M2143 553C2240 553 2100 333 2199 333", "M2143 553C2308 553 2308 451 2472 451", "M2143 553C2220 553 1935 642 2016 642",
  "M2141 642H2245", "M2010 676C2020 676 2006 660 2016 660", "M2233 672C2243 672 2235 660 2245 660",
  "M2455 490C2467 490 2460 469 2472 469", "M2454 542C2474 542 2452 487 2472 487",
  "M2617 451L2704 447", "M2689 478C2699 478 2694 465 2704 465", "M2841 447H2898",
  "M2837 742C2960 742 2775 465 2898 465", "M2931 832C3086 832 2743 482 2898 482",
  "M2977 873C3137 873 2738 500 2898 500", "M2977 929C3162 929 2713 518 2898 518",
  "M3090 447H3118", "M3090 465C3128 465 3080 551 3118 551",
  "M2685 678C2710 678 2675 741 2699 741", "M2685 678C2800 678 2530 900 2640 900",
  "M2837 742C2935 742 2540 836 2640 836", "M2682 759H2699", "M2682 797C2694 797 2688 777 2699 777",
];

const PORT_DOTS = [
  [1641, 294], [1641, 312], [1641, 378], [1641, 396], [1640, 466], [1640, 483], [1795, 294], [1795, 378], [1794, 466],
  [1824, 361], [1824, 379], [1971, 361], [1998, 449], [1998, 467], [1934, 553], [1934, 571], [1934, 588], [2016, 553], [2023, 553],
  [2144, 553], [2198, 333], [2015, 642], [2015, 660], [2142, 642], [2244, 642], [2244, 660], [2011, 676], [2234, 672],
  [2456, 490], [2455, 542], [2471, 451], [2471, 469], [2471, 487], [2618, 451], [2703, 447], [2703, 465], [2690, 478], [2842, 447],
  [2897, 447], [2897, 465], [2897, 482], [2897, 500], [2897, 518], [3091, 447], [3091, 465], [3117, 447], [3117, 551],
  [2686, 678], [2698, 741], [2698, 759], [2698, 777], [2683, 759], [2683, 797], [2639, 836], [2639, 900], [2838, 742],
  [2932, 832], [2978, 873], [2978, 929],
];

function Chev() {
  return (
    <svg width="6" height="8" viewBox="0 0 6 8" className="shrink-0" aria-hidden="true"><path d="M1 1l3 3-3 3" fill="none" stroke="#4a4a4a" strokeWidth="2" /></svg>
  );
}

function NodeBody({ n }: { n: GNode }) {
  const port = "bg-[#e4e1dc]";
  if (n.kind === "num")
    return (
      <div className="flex h-[17px] items-center justify-between bg-[#e4e1dc] text-[9px]">
        <input aria-label={n.title + " value"} defaultValue={n.value} className="h-[13px] min-w-0 flex-1 pl-[3px] text-[#555]" />
        <span className="w-3 text-center">&gt;</span>
      </div>
    );
  if (n.kind === "watch")
    return (
      <>
        <div className="flex justify-between text-[9px] leading-[17px]"><span className={port + " w-[14px] text-center"}>&gt;</span><span className={port + " w-[14px] text-center"}>&gt;</span></div>
        <div className="mx-1 mt-[5px] overflow-hidden border-b border-[#d8d4ce] bg-[#e4e1dc] py-1 pl-[13px] font-['Liberation_Mono',monospace] text-[7px] leading-[10px] whitespace-pre text-[#555]">
          {n.lines!.map((l) => <div key={l}>{l}</div>)}
        </div>
      </>
    );
  if (n.kind === "file")
    return (
      <>
        <div className="flex text-[9px] leading-[17px]"><button className="flex-1 bg-linear-to-b from-[#f4f3f1] to-[#d8d5d0]">Browse...</button><span className={port + " w-[14px] text-center"}>&gt;</span></div>
        <div className="pt-px pl-px text-[8px] leading-4 whitespace-nowrap">{n.value}</div>
      </>
    );
  if (n.kind === "cat")
    return (
      <div className="flex text-[9px] leading-[17px]">
        <span className="relative h-[17px] w-[74px]">
          <select aria-label="Category" className="block h-full w-full appearance-none border border-[#999] bg-linear-to-b from-[#f4f3f1] to-[#d0cdc8] pl-px text-[8px] leading-[14px]"><option>{n.value}</option></select>
          <span className="absolute right-[3px] bottom-[5px] flex"><Tri c="#111" w={5} /></span>
        </span>
        <span className={port + " flex-1 text-center"}>{n.outs![0]}</span>
      </div>
    );
  return (
    <div className="flex justify-between text-[9px] leading-[17px]">
      <div className="flex flex-col gap-px" style={{ width: n.lw ?? 0 }}>
        {(n.ins ?? []).map((p) => (
          <div key={p} className={port + " flex h-[17px] items-center justify-between pl-1"}>{p}{n.kind !== "list" && <Chev />}</div>
        ))}
      </div>
      {n.kind === "list" && <div className="flex h-[14px] flex-1 gap-px leading-3"><button className="flex-1 bg-[#eceae7]">+</button><button className="flex-1 bg-[#eceae7]">-</button></div>}
      <div className="flex flex-col gap-px" style={{ width: n.rw }}>
        {(n.outs ?? []).map((p) => <div key={p} className={port + " h-[17px] pr-[3px] text-right"}>{p}</div>)}
      </div>
    </div>
  );
}

function NodeCard({ n }: { n: GNode }) {
  return (
    <div className="absolute" style={{ left: n.x, top: n.y, width: n.w, height: n.h }}>
      {n.stack && <div className="absolute -top-[3px] right-[3px] left-[3px] h-[3px] border-x border-t border-[#999] bg-[#e8e6e2]" />}
      <article className="relative h-full overflow-hidden border border-[#84817b] border-t-[#5d5b58] bg-[#cbc6be] text-[#333]">
        <h3 className="h-[18px] bg-[#5d5b58] text-center text-[9px] leading-[17px] font-bold whitespace-nowrap text-white">{n.title}</h3>
        <NodeBody n={n} />
        {!n.kind && <span className="absolute right-1 bottom-1 h-[5px] w-px bg-[#8a8780]" />}
      </article>
    </div>
  );
}

type Row = { d: number; i?: string; t: string; open?: boolean };
const A = "Arc(Normal = Vector(X = 0.000, Y = 0.000, Z = 1.000)";
const L = "Line(StartPoint = Point(X = 13700.000, Y = 0.000)";

function Rows({ rows }: { rows: Row[] }) {
  return (
    <div className="overflow-hidden font-['Liberation_Mono',monospace] text-[7px] leading-[10px] whitespace-pre text-[#555]">
      {rows.map((r, k) => (
        <div key={k} className="flex items-center" style={{ paddingLeft: 11 + r.d * 11 }}>
          {r.open && <Tri c="#8fb8d8" w={5} />}
          {r.i !== undefined && (r.open ? <i className="mr-[2px] ml-px">{r.i}</i> : <i className="my-px mr-[3px] ml-px w-[13px] shrink-0 bg-[#d2d2d2] text-center leading-[8px]">{r.i}</i>)}
          <span>{r.t}</span>
        </div>
      ))}
    </div>
  );
}

type Prev = { x: number; y: number; w: number; h: number; fh: number; levels: string; count: string; rows: Row[]; rails: number[][] };
const PREVIEWS: Prev[] = [
  { x: 1976, y: 688, w: 206, h: 118, fh: 18, levels: "@L3 @L2 @L1", count: "{6}", rails: [[21, 24, 29], [21, 64, 31]], rows: [
    { d: 0, t: "List" }, { d: 1, t: "List", i: "0", open: true }, { d: 2, i: "0", t: A }, { d: 2, i: "1", t: A }, { d: 2, i: "2", t: L },
    { d: 1, t: "List", i: "1", open: true }, { d: 2, i: "0", t: L }, { d: 2, i: "1", t: A }, { d: 2, i: "2", t: A }] },
  { x: 2205, y: 688, w: 206, h: 138, fh: 19, levels: "@L4 @L3 @L2 @L1", count: "{6}", rails: [[11, 15, 98], [32, 34, 29], [32, 84, 29]], rows: [
    { d: 0, t: "List" }, { d: 1, t: "List", i: "0", open: true }, { d: 2, t: "List", i: "0", open: true }, { d: 3, i: "0", t: A }, { d: 3, i: "1", t: A }, { d: 3, i: "2", t: L },
    { d: 1, t: "List", i: "1", open: true }, { d: 2, t: "List", i: "0", open: true }, { d: 3, i: "0", t: L }, { d: 3, i: "1", t: A }, { d: 3, i: "2", t: A }] },
  { x: 2465, y: 515, w: 159, h: 100, fh: 20, levels: "@L2 @L1", count: "{6}", rails: [[12, 14, 60]], rows: [
    { d: 0, t: "List" }, ...["0", "1", "2", "3", "4", "5"].map((i) => ({ d: 1, i, t: "Surface" }))] },
  { x: 2892, y: 582, w: 205, h: 68, fh: 19, levels: "@L2 @L1", count: "{2}", rails: [[11, 15, 28]], rows: [
    { d: 0, t: "List" }, { d: 1, i: "0", t: "Make sure that each geometry\nobject has a unique family name." }, { d: 1, i: "1", t: "" }] },
];

function Preview({ p }: { p: Prev }) {
  return (
    <div className="absolute flex flex-col border border-[#cfcfcf] bg-white" style={{ left: p.x, top: p.y, width: p.w, height: p.h }}>
      <div className="min-h-0 flex-1 overflow-hidden pt-1"><Rows rows={p.rows} /></div>
      {p.rails.map(([x, y, h], i) => (
        <span key={i} className="absolute flex w-px items-end justify-center bg-[#bbb]" style={{ left: x, top: y, height: h }}>
          <span className="h-[3px] w-[3px] shrink-0 rounded-full bg-[#bbb]" />
        </span>
      ))}
      <div className="flex items-center justify-between border-t border-[#cfcfcf] px-[5px] text-[#777]" style={{ height: p.fh }}>
        <span className="font-['Liberation_Mono',monospace] text-[6px]">{p.levels}</span>
        <i className="text-[8px]">{p.count}</i>
      </div>
    </div>
  );
}

function BigWatch() {
  return (
    <div className="absolute top-[306px] left-[2198px] flex h-[143px] w-[199px] flex-col border border-[#84817b] bg-[#cbc6be] text-[#333]">
      <h3 className="h-[17px] bg-[#5d5b58] text-center text-[9px] leading-4 font-bold text-white">Watch</h3>
      <div className="flex justify-between text-[9px] leading-[17px]"><span className="w-[14px] bg-[#e4e1dc] text-center">&gt;</span><span className="w-[14px] bg-[#e4e1dc] text-center">&gt;</span></div>
      <div className="mx-1 mt-1 flex-1 overflow-hidden bg-[#e4e1dc] pt-1">
        <Rows rows={[{ d: 0, t: "List" }, { d: 1, i: "0", t: A }, { d: 1, i: "1", t: A }, { d: 1, i: "2", t: L }, { d: 1, i: "3", t: L }, { d: 1, i: "4", t: A }, { d: 1, i: "5", t: A }]} />
      </div>
      <div className="flex h-5 items-center justify-between px-2"><span className="font-['Liberation_Mono',monospace] text-[6px]">@L2 @L1</span><i className="text-[8px]">{"{6}"}</i></div>
    </div>
  );
}

function GraphCanvas() {
  const ctl = "flex h-[23px] w-6 items-center justify-center border border-[#e4e4e4] bg-[#f4f4f4]";
  return (
    <main className="relative min-w-0 flex-1 overflow-hidden border-b-2 border-[#9a9a9a] bg-[#f9f9f9]">
      <div className="absolute -top-[100px] -left-[1629px] h-[1080px] w-[3400px]">
        <div className="absolute top-[626px] left-[2480px] h-[318px] w-[364px] bg-[#dce8b8] pl-1 text-[9px] leading-[10px] text-black">&lt;Click here to edit the group title&gt;</div>
        <svg width="3400" height="1080" className="absolute inset-0" aria-hidden="true">
          <g fill="none" stroke="#454545" strokeWidth="1.8">{WIRES.map((d) => <path key={d} d={d} />)}</g>
          <g fill="#3f3f3f">{PORT_DOTS.map(([x, y]) => <circle key={x + "," + y} cx={x} cy={y} r="2.3" />)}</g>
        </svg>
        {NODES.map((n, i) => <NodeCard key={i} n={n} />)}
        <BigWatch />
        {PREVIEWS.map((p) => <Preview key={p.x} p={p} />)}
      </div>
      <div className="absolute top-3 right-1 flex gap-1">
        <button aria-label="Background preview" className="flex h-6 w-[52px] items-center justify-center border border-[#dcdcdc] bg-[#f4f4f4]"><Ic w={38} h={16} vb="0 0 38 16"><circle cx="6" cy="10" r="4" stroke="#777" /><path d="M8 8l6-6 5 5-5 5zM22 6l3-3h9v7l-3 3h-9zM22 6h9v7" stroke="#777" /></Ic></button>
        <button aria-label="Graph view" className="flex h-6 w-[52px] items-center justify-center border border-[#dcdcdc] bg-[#f4f4f4]"><Ic w={38} h={16} vb="0 0 38 16"><path d="M2 2h12v5H2zM22 2h13v5H22zM22 9h13v5H22zM14 4h8M14 5c5 0 3 7 8 7" stroke="#2a9fd8" fill="#d5eefa" /></Ic></button>
      </div>
      <div className="absolute top-[47px] right-[7px] flex flex-col">
        <button aria-label="Zoom to fit" className={ctl}><Ic s={12}><path d="M1 5V1h4M11 1h4v4M15 11v4h-4M5 15H1v-4" stroke="#555" strokeWidth="2" /></Ic></button>
        <button aria-label="Zoom in" className={ctl}><Ic s={12}><path d="M8 2v12M2 8h12" stroke="#555" strokeWidth="2" /></Ic></button>
        <button aria-label="Zoom out" className={ctl}><Ic s={12}><path d="M2 8h12" stroke="#555" strokeWidth="2" /></Ic></button>
        <button aria-label="Pan" className={ctl + " mt-2"}><Ic s={14}><path d="M8 1v14M1 8h14M6 3l2-2 2 2M6 13l2 2 2-2M3 6L1 8l2 2M13 6l2 2-2 2" stroke="#555" /></Ic></button>
      </div>
    </main>
  );
}

/* ---------- Dynamo: chrome ---------- */

const LIB = ["Analyze", "Archi-lab_Grimshaw", "Archi-lab_MantisShrimp", "Archive", "BuiltIn", "Clockwork", "Core", "Display", "Geometry", "LunchBox", "Office", "Operators", "Revit", "Rhynamo"];

function LibArrow() {
  return <svg width="6" height="7" className="shrink-0" aria-hidden="true"><path d="M0 0v7l6-3.500z" fill="#8d8d8d" /></svg>;
}

function Library() {
  return (
    <aside className="flex w-[263px] shrink-0 flex-col border-r-2 border-[#2a2a2a] bg-[#343434] text-[13px] text-[#9c9c9c]">
      <div className="flex h-[21px] items-center bg-[#222] pr-[6px] pl-4 text-[12px] text-[#b5b5b5]">
        <span className="flex-1">Library</span>
        <span className="mx-[5px] h-[10px] w-px bg-[#888]" />
        <Ic s={10}><path d="M1 2h14L10 8v7H6V8z" fill="#3c3c3c" stroke="none" /></Ic>
        <span className="mx-[5px] h-[10px] w-px bg-[#888]" />
        <Ic s={10}><path d="M0 3h16M0 8h16M0 13h16" stroke="#3c3c3c" strokeWidth="3" /></Ic>
        <span className="mx-[5px] h-[10px] w-px bg-[#888]" />
        <Ic s={10}><path d="M9 1v14L2 8z" fill="#aaa" stroke="none" /><path d="M14 1v14" stroke="#aaa" strokeWidth="2" /></Ic>
      </div>
      <label className="m-[5px] flex h-7 items-center justify-center gap-2 rounded-md bg-[#f1f1f1]">
        <Ic s={13}><circle cx="6" cy="6" r="4.5" stroke="#555" strokeWidth="2.5" /><path d="M9.500 9.500L15 15" stroke="#555" strokeWidth="3" /></Ic>
        <input aria-label="Search" placeholder="Search" className="w-[52px] text-[13px] placeholder:text-[#757575]" />
      </label>
      {LIB.map((t) => (
        <button key={t} className="mr-[1px] flex h-[33px] shrink-0 items-center gap-[13px] border-b border-[#383838] bg-[#272727] pl-[10px] text-left"><LibArrow />{t}</button>
      ))}
      <button className="mr-[1px] flex h-8 shrink-0 items-center gap-[13px] bg-[#272727] pl-[10px] text-left font-semibold text-[#a8a8a8]"><Tri c="#8d8d8d" w={6} />Springs</button>
      <div className="flex flex-col pt-1 pb-[3px]">
        {["Core", "Geometry", "Revit"].map((t) => (
          <button key={t} className="ml-[9px] flex h-8 items-center text-left">
            <span className={t === "Revit" ? "h-4 w-px self-start bg-[#777]" : "h-8 w-px bg-[#777]"} />
            <span className="mr-[6px] h-px w-[14px] bg-[#777]" />
            <LibArrow />
            <span className="ml-2">{t}</span>
          </button>
        ))}
      </div>
      <button className="mr-[1px] flex h-8 shrink-0 items-center gap-[13px] bg-[#272727] pl-[10px] text-left"><LibArrow />Temp</button>
      <button className="mt-[22px] flex h-[23px] w-[68px] items-center justify-center gap-3 self-center border border-[#5e5e5e]">Add <Tri c="#8d8d8d" w={5} /></button>
    </aside>
  );
}

function Dynamo() {
  return (
    <div className="flex min-w-0 flex-col bg-[#343434]">
      <div className="flex h-[22px] items-center border-b border-[#dcebfa] bg-linear-to-r from-[#c4dcf5] via-[#a9cbec] via-10% to-[#b4d2f0] pr-1 pl-[2px] text-[12px] text-black">
        <RLogo s={15} /><span className="ml-[4px]">Dynamo</span>
        <span className="ml-3 h-2 w-2 rounded-full bg-[#6f5f72] blur-[2px]" />
        <span className="ml-3 h-2 w-[130px] rounded-full bg-[#7f9dbb] opacity-60 blur-[3px]" />
        <span className="ml-[90px] h-3 w-3 rounded-full bg-[#6fc3b4] blur-[2px]" />
        <span className="ml-2 h-2 w-[110px] rounded-full bg-[#6e8aa8] opacity-70 blur-[3px]" />
        <div className="ml-auto self-start"><WindowButtons /></div>
      </div>
      <nav className="flex h-[26px] items-center gap-[29px] border-b border-[#404040] pl-4 text-[12px] text-[#b0b0b0]">
        {["File", "Edit", "View", "Packages", "Settings", "Help"].map((m) => <button key={m}>{m}</button>)}
        <Ic s={16}><circle cx="8" cy="8" r="8" fill="#e3e3e3" stroke="none" /><path d="M8 3v6M8 11v2" stroke="#222" strokeWidth="2" /></Ic>
      </nav>
      <div className="flex h-[31px] items-center pr-[18px] pl-4 text-[#777]">
        <button aria-label="New" className="w-[38px]"><Ic s={16}><path d="M1 0h9l5 5v11H1z" fill="#777" stroke="none" /><path d="M10 0v5h5" stroke="#343434" /></Ic></button>
        <button aria-label="Open" className="w-[43px]"><Ic s={18}><path d="M4 1h5l1 1h3v4h2L13 15H3L0 6h4z" fill="#777" stroke="none" /></Ic></button>
        <button aria-label="Save" className="w-[39px]"><Ic s={16}><path d="M1 1h14v14H1zM4 1v5h8V1M4 15v-5h8v5" stroke="#777" strokeWidth="1.6" /></Ic></button>
        <button aria-label="Undo" className="w-[41px]"><Ic s={18}><path d="M0 6l6-5v3c5 0 9 4 10 11-3-5-6-7-10-6v3z" fill="#777" stroke="none" /></Ic></button>
        <button aria-label="Redo"><Ic s={18}><path d="M16 6l-6-5v3c-5 0-9 4-10 11 3-5 6-7 10-6v3z" fill="#4a4a4a" stroke="none" /></Ic></button>
        <button aria-label="Export image" className="ml-auto"><Ic s={20}><path d="M0 4h4l2-2h4l2 2h4v9H0z" fill="#777" stroke="none" /><circle cx="8" cy="8.5" r="2.5" fill="#343434" stroke="none" /></Ic></button>
      </div>
      <div className="flex min-h-0 flex-1">
        <Library />
        <div className="flex min-w-0 flex-1 flex-col">
          <div className="flex h-[21px] bg-[#222]">
            <div className="flex w-[250px] items-center justify-between bg-[#343434] pr-1 pl-[9px] text-[12px] text-[#bdbdbd]">Ceiling Baffle_Vol 01.dyn*
              <button aria-label="Close tab"><Ic s={11}><path d="M2 2l12 12M14 2L2 14" stroke="#777" strokeWidth="2" /></Ic></button>
            </div>
            <div className="flex flex-1 items-center justify-end pr-[3px]"><Ic s={12}><path d="M1 4h14M1 8h14M1 12h14" stroke="#777" strokeWidth="2" /></Ic></div>
          </div>
          <GraphCanvas />
        </div>
      </div>
      <footer className="flex h-[48px] shrink-0 items-center bg-linear-to-b from-[#242424] to-[#101010] pl-1">
        <button className="flex h-[37px] w-[120px] items-center justify-between border border-[#4a4a4a] bg-[#2a2a2a] pr-[10px] pl-2 text-[13px] text-[#dcdcdc]">Automatic<Tri c="#ccc" w={7} /></button>
        <span className="ml-[104px] text-[12px] text-[#8a8a8a] italic">Run completed.</span>
      </footer>
    </div>
  );
}

export default function App() {
  return (
    <div className="grid h-screen grid-cols-[1366fr_1920fr] overflow-hidden bg-black font-['Open_Sans',sans-serif]">
      <div className="flex min-w-0 flex-col">
        <Revit />
        <div className="flex-[312]" />
      </div>
      <Dynamo />
    </div>
  );
}
